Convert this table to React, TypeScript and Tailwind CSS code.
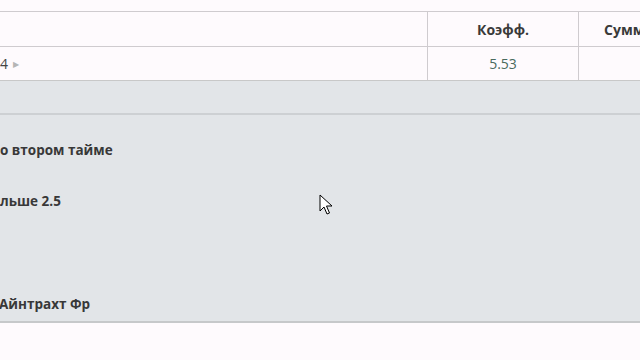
import React from 'react';

const font = { fontFamily: '"Open Sans", "DejaVu Sans", sans-serif' };

function Cursor() {
    return (
        <svg className="absolute left-[319px] top-[194px]" width="14" height="22" viewBox="0 0 14 22">
            <path d="M1 1 L1 17 L5 13 L8 20 L10.5 19 L7.5 12 L13 12 Z" fill="#fff" stroke="#000" strokeWidth="1" strokeLinejoin="miter" />
        </svg>
    );
}

export default function App() {
    return (
        <div className="relative w-[640px] h-[360px] overflow-hidden bg-[#fefafd] text-[#333]" style={font}>
            <div className="h-[11px]" />
            <div className="border-t border-[#cfcbcf]">
                {/* header row */}
                <div className="flex h-[35px] border-b border-[#cfcbcf]">
                    <div className="w-[428px] shrink-0 border-r border-[#cfcbcf]" />
                    <div className="w-[151px] shrink-0 border-r border-[#cfcbcf] flex items-center justify-center text-[14px] font-bold text-[#3a3a3a]">
                        Коэфф.
                    </div>
                    <div className="flex-1 flex items-center pl-[25px] text-[14px] font-bold text-[#3a3a3a] whitespace-nowrap">
                        Сумма
                    </div>
                </div>
                {/* bet row */}
                <div className="flex h-[34px] border-b border-[#c8c8c8]">
                    <div className="w-[428px] shrink-0 border-r border-[#cfcbcf] flex items-center gap-[5px] text-[14px] text-[#444]">
                        <span>4</span>
                        <span className="text-[8px] text-[#b5b5b5]">▶</span>
                    </div>
                    <div className="w-[151px] shrink-0 border-r border-[#cfcbcf] flex items-center justify-center text-[14px] text-[#4a6a5e]">
                        5.53
                    </div>
                    <div className="flex-1" />
                </div>
            </div>
            {/* grey band */}
            <div className="h-[34px] bg-[#e2e5e8] border-b-2 border-[#cdd0d3]" />
            {/* details panel */}
            <div className="h-[208px] bg-[#e2e5e8] border-b-2 border-[#c6c8ca] text-[13.5px] font-bold text-[#383838] whitespace-nowrap flex flex-col">
                <div className="mt-[25px] h-[20px] flex items-center">о втором тайме</div>
                <div className="mt-[31px] h-[20px] flex items-center">льше 2.5</div>
                <div className="mt-[83px] h-[20px] flex items-center -ml-[1px]">Айнтрахт Фр</div>
            </div>
            <Cursor />
        </div>
    );
}
